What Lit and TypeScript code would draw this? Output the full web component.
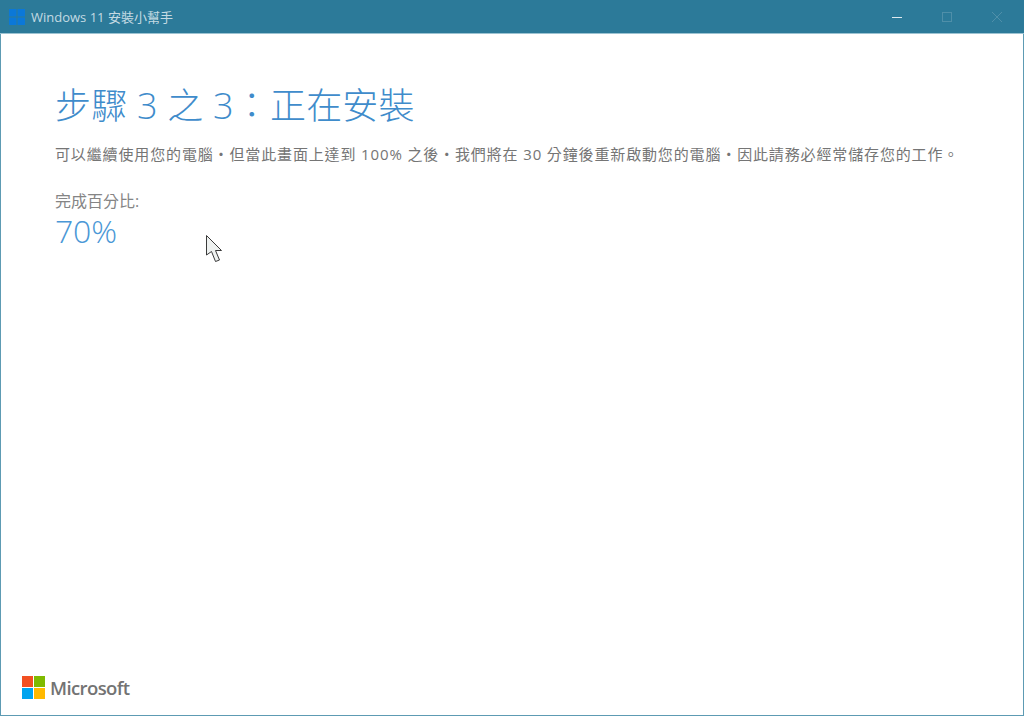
import { LitElement, html, css } from "lit";
import { customElement } from "lit/decorators.js";

@customElement("app-root")
export class AppRoot extends LitElement {
  static styles = css`
    :host {
      display: block;
      width: 1024px;
      height: 716px;
      overflow: hidden;
      font-family: "Open Sans", "Noto Sans CJK TC", sans-serif;
    }
    .window {
      position: relative;
      box-sizing: border-box;
      width: 1024px;
      height: 716px;
      display: flex;
      flex-direction: column;
      background: #fff;
      border: 1px solid #5d9bb3;
      border-top: 0;
    }
    .titlebar {
      flex: none;
      height: 33px;
      margin: 0 -1px;
      display: flex;
      align-items: center;
      background: #2c7a99;
      border-bottom: 1px solid #9cc3d2;
      color: #c4dae3;
      font-size: 13px;
    }
    .winlogo {
      margin-left: 9px;
      margin-right: 6px;
      display: block;
    }
    .controls {
      margin-left: auto;
      margin-right: 2px;
      display: flex;
    }
    .ctrl {
      width: 50px;
      height: 33px;
      display: flex;
      align-items: center;
      justify-content: center;
    }
    .content {
      flex: 1;
      display: flex;
      flex-direction: column;
      padding: 49px 0 0 54px;
    }
    h1 {
      margin: 0;
      font-size: 36px;
      line-height: 46px;
      font-weight: 300;
      letter-spacing: 0.2px;
      color: #3f8ccb;
    }
    .desc {
      margin: 15px 0 0;
      font-size: 15px;
      line-height: 20px;
      letter-spacing: 0.86px;
      color: #757575;
      white-space: nowrap;
    }
    .label {
      margin-top: 27px;
      font-size: 16px;
      line-height: 20px;
      color: #858585;
    }
    .pct {
      font-size: 32px;
      line-height: 40px;
      font-weight: 300;
      letter-spacing: -0.2px;
      color: #4a97d6;
    }
    .brand {
      margin-top: auto;
      margin-bottom: 15px;
      margin-left: -33px;
      display: flex;
      align-items: center;
      gap: 5px;
      font-size: 18.5px;
      font-weight: 600;
      letter-spacing: -0.6px;
      color: #737373;
    }
    .cursor {
      position: absolute;
      left: 204px;
      top: 235px;
    }
  `;

  render() {
    return html`
      <div class="window">
        <div class="titlebar">
          <svg class="winlogo" width="16" height="16" viewBox="0 0 16 16">
            <rect x="0" y="0" width="7.5" height="7.5" fill="#0b78d8" />
            <rect x="8.5" y="0" width="7.5" height="7.5" fill="#0b78d8" />
            <rect x="0" y="8.5" width="7.5" height="7.5" fill="#0b78d8" />
            <rect x="8.5" y="8.5" width="7.5" height="7.5" fill="#0b78d8" />
          </svg>
          <span>Windows 11 安裝小幫手</span>
          <div class="controls">
            <div class="ctrl">
              <svg width="10" height="10" viewBox="0 0 10 10"><path d="M0 5.5H10" stroke="#dfeaef" fill="none" /></svg>
            </div>
            <div class="ctrl">
              <svg width="10" height="10" viewBox="0 0 10 10"><rect x="0.5" y="0.5" width="9" height="9" stroke="#4f8fa9" fill="none" /></svg>
            </div>
            <div class="ctrl">
              <svg width="10" height="10" viewBox="0 0 10 10"><path d="M0 0L10 10M10 0L0 10" stroke="#4f8fa9" fill="none" /></svg>
            </div>
          </div>
        </div>
        <div class="content">
          <h1>步驟 3 之 3：正在安裝</h1>
          <p class="desc">可以繼續使用您的電腦・但當此畫面上達到 100% 之後・我們將在 30 分鐘後重新啟動您的電腦・因此請務必經常儲存您的工作。</p>
          <div class="label">完成百分比:</div>
          <div class="pct">70%</div>
          <div class="brand">
            <svg width="23" height="23" viewBox="0 0 23 23">
              <rect x="0" y="0" width="11" height="11" fill="#f25022" />
              <rect x="12" y="0" width="11" height="11" fill="#7fba00" />
              <rect x="0" y="12" width="11" height="11" fill="#00a4ef" />
              <rect x="12" y="12" width="11" height="11" fill="#ffb900" />
            </svg>
            <span>Microsoft</span>
          </div>
        </div>
        <svg class="cursor" width="18" height="28" viewBox="0 0 18 28">
          <path d="M1.5 0.5V20L6.5 16.5L10.5 26.5L14.5 25L10.5 15.5H16.5Z" fill="#eef1f0" stroke="#3a3a3a" stroke-width="1" stroke-linejoin="round" />
        </svg>
      </div>
    `;
  }
}
